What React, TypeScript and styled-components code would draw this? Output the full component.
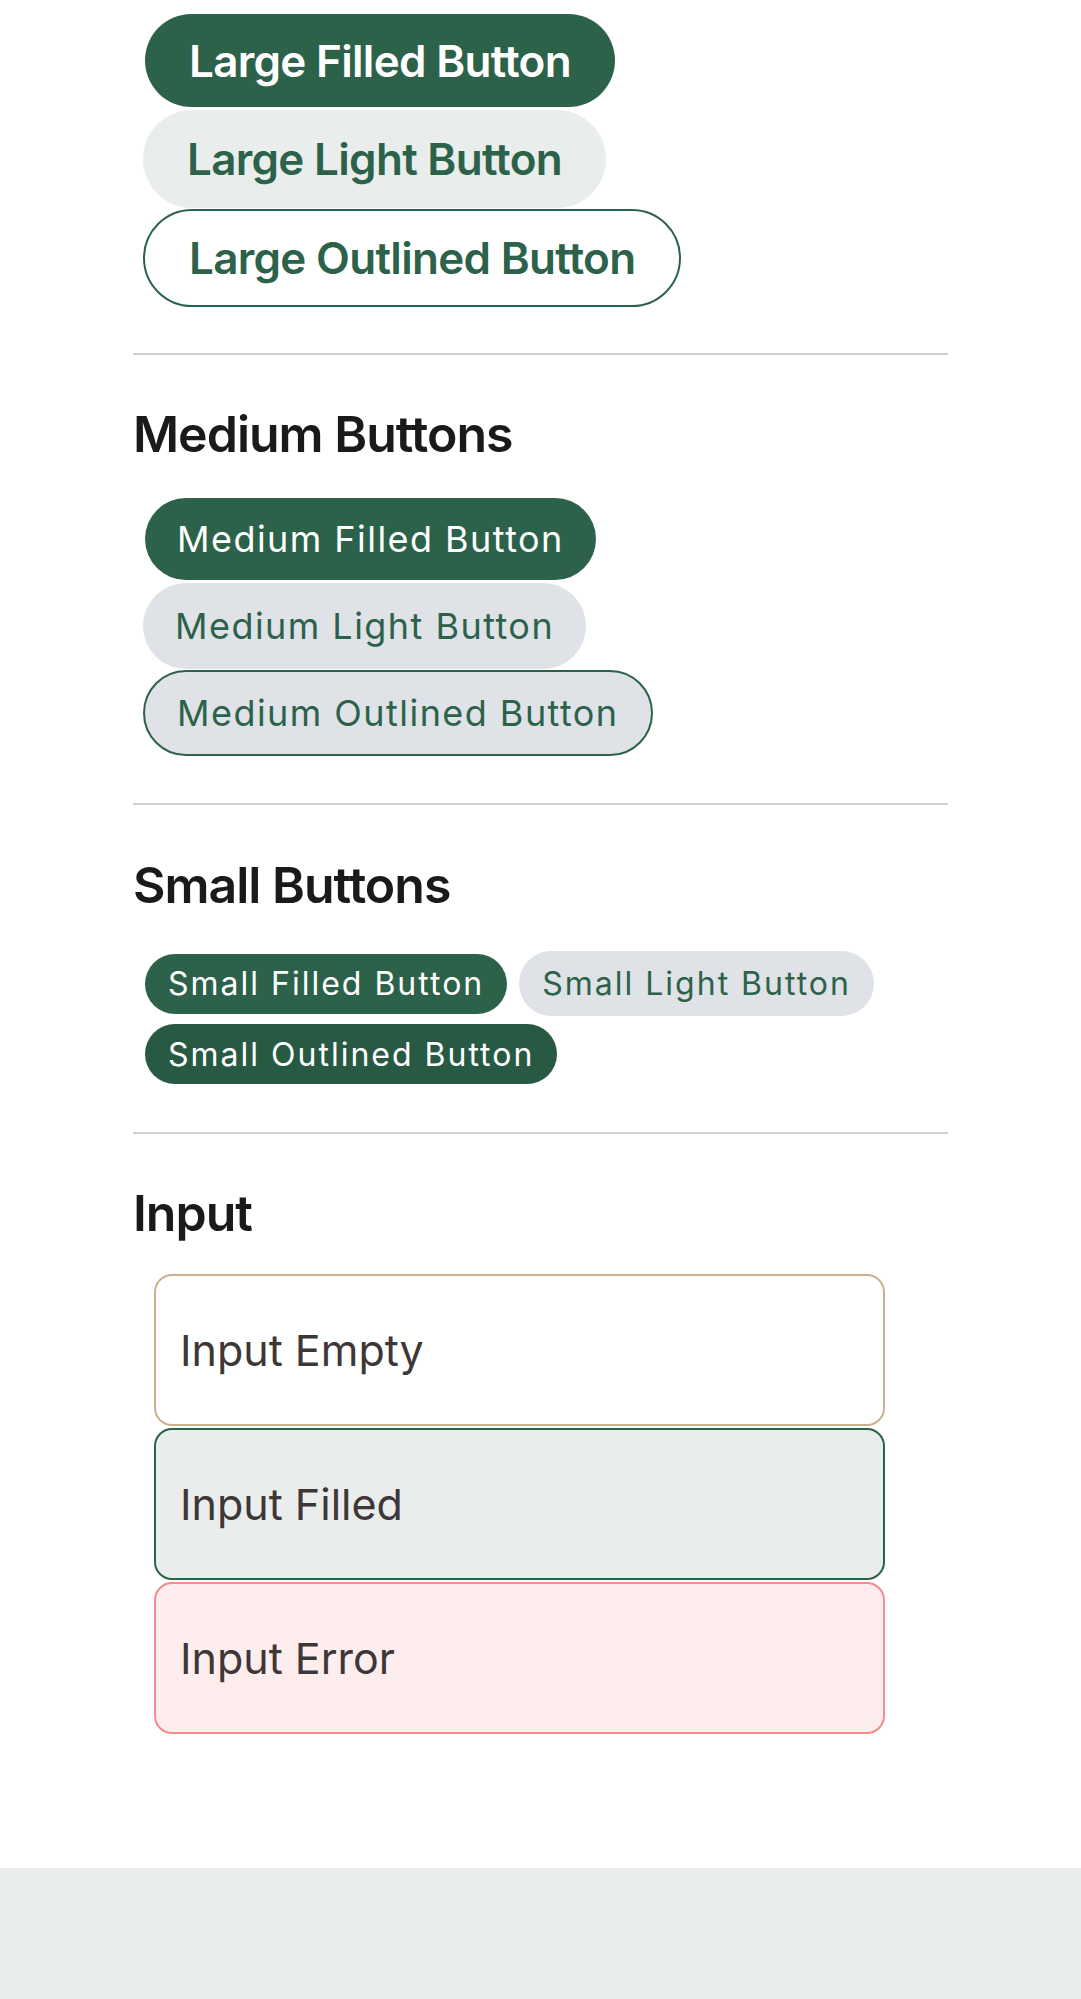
import React from 'react';
import styled, { createGlobalStyle, css } from 'styled-components';

const GlobalStyle = createGlobalStyle`
  html, body {
    margin: 0;
    padding: 0;
    background: #ffffff;
  }
  body {
    font-family: Inter, "Noto Sans", "Liberation Sans", sans-serif;
  }
  * {
    box-sizing: border-box;
  }
`;

const green = '#2d624a';

const Page = styled.div`
  min-height: 100vh;
  display: flex;
  flex-direction: column;
`;

const Main = styled.main`
  width: 815px;
  margin: 0 auto;
  padding: 12px 0 134px;
  display: flex;
  flex-direction: column;
`;

const Footer = styled.footer`
  flex: 1;
  min-height: 130px;
  background: #e9edec;
`;

const Divider = styled.hr<{ $top: number }>`
  margin: ${(p) => p.$top}px 0 0;
  border: none;
  height: 2px;
  background: #cfcfcf;
`;

const Heading = styled.h2<{ $before: number; $after: number }>`
  margin: ${(p) => p.$before}px 0 ${(p) => p.$after}px;
  font-size: 50px;
  line-height: 50px;
  font-weight: 600;
  letter-spacing: -1px;
  color: #1b1a19;
`;

const Stack = styled.div`
  display: flex;
  flex-direction: column;
  align-items: flex-start;
  gap: 1px;
  padding-left: 10px;
`;

const Row = styled.div`
  display: flex;
  flex-wrap: wrap;
  align-items: center;
  column-gap: 12px;
  row-gap: 8px;
  padding-left: 12px;
`;

type Variant = 'filled' | 'light' | 'outlined' | 'dark';
type Size = 'large' | 'medium' | 'small';

const sizes = {
  large: css`
    font-size: 44px;
    font-weight: 600;
    letter-spacing: -0.7px;
    padding: 0 44px;
  `,
  medium: css`
    font-size: 36px;
    font-weight: 400;
    letter-spacing: 1.45px;
    padding: 0 32px;
  `,
  small: css`
    font-size: 32px;
    font-weight: 400;
    letter-spacing: 2px;
    padding: 0 23px;
  `,
};

const heights: Record<Size, [number, number]> = {
  large: [93, 98],
  medium: [82, 86],
  small: [60, 65],
};

const variants = {
  filled: css`
    background: ${green};
    color: #ffffff;
    border: none;
  `,
  dark: css`
    background: #285a43;
    color: #ffffff;
    border: none;
  `,
  light: css`
    color: ${green};
    border: none;
  `,
  outlined: css`
    color: ${green};
    border: 2px solid ${green};
  `,
};

const Button = styled.button<{ $variant: Variant; $size: Size }>`
  display: inline-flex;
  align-items: center;
  justify-content: center;
  border-radius: 999px;
  font-family: Inter, "Noto Sans", "Liberation Sans", sans-serif;
  white-space: nowrap;
  cursor: pointer;
  ${(p) => sizes[p.$size]}
  ${(p) => variants[p.$variant]}
  height: ${(p) =>
    p.$variant === 'filled' || p.$variant === 'dark' ? heights[p.$size][0] : heights[p.$size][1]}px;
  margin: ${(p) => (p.$variant === 'filled' ? '2px' : '0')};
  background: ${(p) =>
    p.$variant === 'light'
      ? p.$size === 'large'
        ? '#e9edec'
        : '#dfe2e7'
      : p.$variant === 'outlined'
      ? p.$size === 'large'
        ? '#ffffff'
        : '#dfe2e7'
      : undefined};
`;

type InputState = 'empty' | 'filled' | 'error';

const inputStates = {
  empty: css`
    background: #ffffff;
    border-color: #c9b38f;
  `,
  filled: css`
    background: #e9edec;
    border-color: ${green};
  `,
  error: css`
    background: #feeded;
    border-color: #f28d8d;
  `,
};

const InputList = styled.div`
  display: flex;
  flex-direction: column;
  gap: 2px;
  margin-left: 21px;
  width: 731px;
`;

const Field = styled.input<{ $state: InputState }>`
  height: 152px;
  width: 100%;
  border: 2px solid;
  border-radius: 18px;
  padding: 0 24px;
  font-family: Inter, "Noto Sans", "Liberation Sans", sans-serif;
  font-size: 43px;
  color: #3e3737;
  outline: none;
  ${(p) => inputStates[p.$state]}
`;

const App: React.FC = () => {
  return (
    <Page>
      <GlobalStyle />
      <Main>
        <Stack>
          <Button $variant="filled" $size="large">Large Filled Button</Button>
          <Button $variant="light" $size="large">Large Light Button</Button>
          <Button $variant="outlined" $size="large">Large Outlined Button</Button>
        </Stack>
        <Divider $top={46} />

        <Heading $before={54} $after={37}>Medium Buttons</Heading>
        <Stack>
          <Button $variant="filled" $size="medium">Medium Filled Button</Button>
          <Button $variant="light" $size="medium">Medium Light Button</Button>
          <Button $variant="outlined" $size="medium">Medium Outlined Button</Button>
        </Stack>
        <Divider $top={47} />

        <Heading $before={55} $after={41}>Small Buttons</Heading>
        <Row>
          <Button $variant="dark" $size="small" style={{ background: green }}>
            Small Filled Button
          </Button>
          <Button $variant="light" $size="small">Small Light Button</Button>
          <Button $variant="dark" $size="small">Small Outlined Button</Button>
        </Row>
        <Divider $top={48} />

        <Heading $before={54} $after={36}>Input</Heading>
        <InputList>
          <Field $state="empty" defaultValue="Input Empty" />
          <Field $state="filled" defaultValue="Input Filled" />
          <Field $state="error" defaultValue="Input Error" />
        </InputList>
      </Main>
      <Footer />
    </Page>
  );
};

export default App;
